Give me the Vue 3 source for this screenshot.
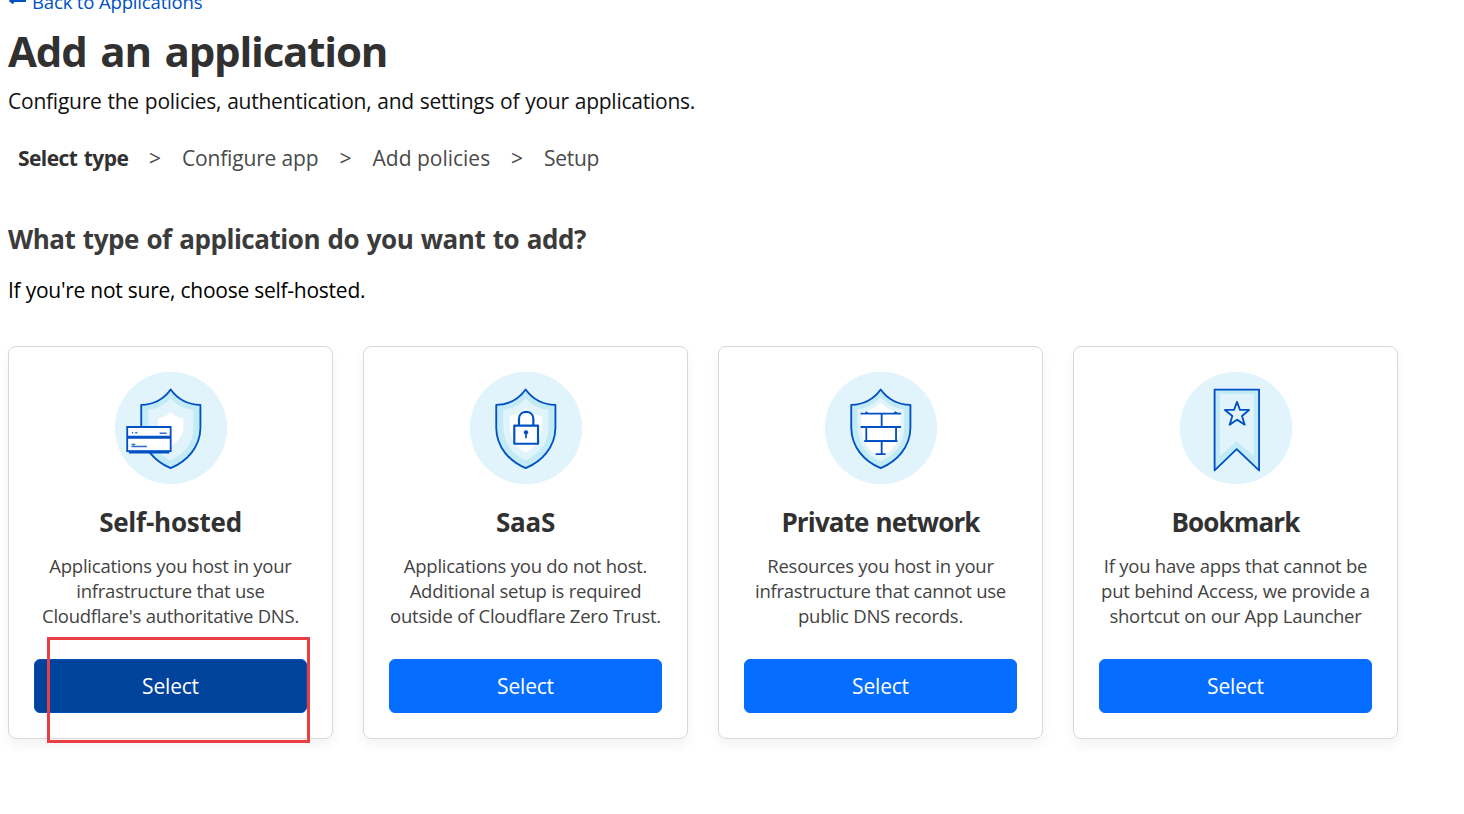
<script setup>
const steps = [
  { label: 'Select type', cls: 'current' },
  { label: 'Configure app', cls: 'configure' },
  { label: 'Add policies', cls: 'policies' },
  { label: 'Setup', cls: 'setup' },
]

const cards = [
  {
    id: 'self-hosted',
    title: 'Self-hosted',
    lines: ['Applications you host in your', 'infrastructure that use', "Cloudflare's authoritative DNS."],
    highlighted: true,
  },
  {
    id: 'saas',
    title: 'SaaS',
    lines: ['Applications you do not host.', 'Additional setup is required', 'outside of Cloudflare Zero Trust.'],
  },
  {
    id: 'private',
    title: 'Private network',
    lines: ['Resources you host in your', 'infrastructure that cannot use', 'public DNS records.'],
  },
  {
    id: 'bookmark',
    title: 'Bookmark',
    lines: ['If you have apps that cannot be', 'put behind Access, we provide a', 'shortcut on our App Launcher'],
  },
]
</script>

<template>
  <main class="page">
    <a class="back">
      <svg class="arrow" width="18" height="12" viewBox="0 0 18 12">
        <path d="M1 6H17M5 2.2L1.2 6L4.6 8.4" fill="none" stroke="#0051c3" stroke-width="1.9" />
      </svg>
      <span>Back to Applications</span>
    </a>
    <h1>Add an application</h1>
    <p class="intro">Configure the policies, authentication, and settings of your applications.</p>

    <nav class="steps">
      <template v-for="(step, i) in steps" :key="step.label">
        <span v-if="i" class="sep">&gt;</span>
        <span class="step" :class="step.cls">{{ step.label }}</span>
      </template>
    </nav>

    <h2>What type of application do you want to add?</h2>
    <p class="hint">If you're not sure, choose self-hosted.</p>

    <section class="cards">
      <article v-for="card in cards" :key="card.id" class="card" :class="card.id">
        <svg class="art" viewBox="11.5 17.5 338 338" fill="none">
          <circle cx="182" cy="188" r="168" fill="#e2f4fb" />
          <template v-if="card.id !== 'bookmark'">
            <path d="M181 73C161 101 132 118 93 119V188C94 246 133 288 181 308C229 288 269 246 270 188V119C231 118 201 101 181 73Z" fill="#c3ebf7" />
            <template v-if="card.id === 'self-hosted'">
              <path d="M181 99C163 119 143 130 114 134V188C116 237 144 268 181 285C218 268 248 237 249 188V134C219 130 199 119 181 99Z" fill="#e2f4fb" />
              <path d="M181 141C171 151 159 157 143 159V190C145 213 160 229 181 240C202 229 217 213 219 190V159C203 157 191 151 181 141Z" fill="#fff" />
            </template>
            <template v-else-if="card.id === 'saas'">
              <path d="M181 99C163 119 143 130 114 134V188C116 237 144 268 181 285C218 268 248 237 249 188V134C219 130 199 119 181 99Z" fill="#e2f4fb" />
              <path d="M181 126C169 140 154 149 134 152V190C136 225 156 248 181 262C206 248 227 225 229 190V152C208 149 193 140 181 126Z" fill="#fff" />
            </template>
            <template v-else>
              <path d="M181 96C163 116 141 128 112 132V188C114 239 143 271 181 288C219 271 250 239 251 188V132C221 128 199 116 181 96Z" fill="#e2f4fb" />
              <path d="M181 111C166 127 148 137 123 140V188C125 232 149 260 181 276C213 260 238 232 240 188V140C214 137 196 127 181 111Z" fill="#fff" />
            </template>
            <path d="M181 73C161 101 132 118 93 119V188C94 246 133 288 181 308C229 288 269 246 270 188V119C231 118 201 101 181 73Z" stroke="#0051c3" stroke-width="5.5" stroke-linejoin="round" />
          </template>

          <template v-if="card.id === 'self-hosted'">
            <path d="M51 185H181V257H51Z" fill="#fff" stroke="#0051c3" stroke-width="5.5" />
            <path d="M51 216H181" stroke="#0051c3" stroke-width="9" />
            <path d="M56 260H177" stroke="#0051c3" stroke-width="8" />
            <path d="M65 202H69M75 202H81M148 204H169M64 237H75M64 243H110" stroke="#2a6dce" stroke-width="4.5" />
          </template>

          <template v-else-if="card.id === 'saas'">
            <path d="M161 181V160C161 133 204 133 204 160V181" stroke="#0051c3" stroke-width="6.5" />
            <path d="M147 181H218V235H147Z" fill="#fff" stroke="#0051c3" stroke-width="6.5" stroke-linejoin="round" />
            <circle cx="182" cy="201" r="6.5" fill="#0051c3" />
            <path d="M182 202V219" stroke="#0051c3" stroke-width="5" />
          </template>

          <path
            v-else-if="card.id === 'private'"
            d="M121 145H242M121 185H242M132 227H231M138 185V227M227 185V227M184 145V185M184 227V266M166 266H196M136 140L142 144M222 140L232 145"
            stroke="#0051c3"
            stroke-width="5.5"
          />

          <template v-else>
            <path d="M118 73H251V315L184 251L118 315Z" fill="#c3ebf7" />
            <path d="M134 86H235V272L184 228L134 272Z" fill="#e2f4fb" />
            <path d="M118 73H251V315L184 251L118 315Z" stroke="#0051c3" stroke-width="5.5" stroke-linejoin="round" />
            <path d="M185 110L194 134H221L200 152L208 178L185 163L163 178L171 152L149 134H176Z" stroke="#0051c3" stroke-width="5.5" stroke-linejoin="round" />
          </template>
        </svg>
        <h3>{{ card.title }}</h3>
        <p class="desc">
          <span v-for="line in card.lines" :key="line">{{ line }}</span>
        </p>
        <button type="button">Select</button>
        <div v-if="card.highlighted" class="marker"></div>
      </article>
    </section>
  </main>
</template>

<style>
html,
body {
  background: #fff;
  overflow: hidden;
}
</style>

<style scoped>
.page {
  box-sizing: border-box;
  height: 814px;
  padding: 0 8px;
  overflow: hidden;
  font-family: 'Open Sans', 'Noto Sans', sans-serif;
  font-size: 21px;
  color: #111;
}

h1,
h2,
h3,
p,
span {
  margin: 0;
  white-space: nowrap;
}

.back {
  display: flex;
  align-items: center;
  gap: 5px;
  height: 30px;
  margin: -14px 0 2px 1px;
  font-size: 18.6px;
  letter-spacing: -0.2px;
  color: #0051c3;
}

h1 {
  font-size: 42px;
  line-height: 65px;
  letter-spacing: -1.2px;
  word-spacing: 4px;
  color: #313131;
}

.intro {
  line-height: 36px;
  letter-spacing: -0.24px;
  word-spacing: 0.65px;
}

.steps {
  display: flex;
  height: 40px;
  margin: 19px 0 0 10px;
  line-height: 40px;
  color: #4a4a4a;
}

.sep {
  width: 13px;
  margin: 0 20.5px;
  text-align: center;
  font-size: 21px;
}

.current {
  width: 110px;
  font-weight: 700;
  letter-spacing: -0.55px;
  word-spacing: 1.5px;
  color: #313131;
}

.configure {
  width: 136.5px;
  letter-spacing: -0.17px;
}

.policies {
  width: 117.5px;
}

.setup {
  letter-spacing: -0.3px;
}

h2 {
  margin-top: 41px;
  font-size: 26px;
  line-height: 41px;
  letter-spacing: -0.45px;
  word-spacing: 1.15px;
  color: #3b3b3b;
}

.hint {
  margin-top: 15px;
  line-height: 30px;
  letter-spacing: -0.25px;
  color: #000;
}

.cards {
  display: grid;
  grid-template-columns: repeat(4, 325px);
  gap: 30px;
  margin-top: 41px;
}

.card {
  position: relative;
  display: flex;
  flex-direction: column;
  align-items: center;
  box-sizing: border-box;
  height: 393px;
  padding: 24px 25px 25px;
  border: 1px solid #d9d9d9;
  border-radius: 8px;
  box-shadow: 0 6px 12px rgba(0, 0, 0, 0.05);
}

.art {
  width: 113px;
  height: 113px;
  flex: none;
}

h3 {
  margin-top: 18px;
  font-size: 26px;
  line-height: 40px;
  letter-spacing: -0.23px;
  color: #313131;
}

.private h3 {
  letter-spacing: -0.85px;
  word-spacing: 1px;
}

.bookmark h3 {
  letter-spacing: -0.85px;
}

.desc {
  display: flex;
  flex-direction: column;
  align-items: center;
  margin-top: 11px;
  font-size: 18.5px;
  line-height: 25px;
  letter-spacing: -0.25px;
  color: #434343;
}

button {
  width: 100%;
  height: 54px;
  margin-top: auto;
  padding: 0 0 1px;
  border: 1px solid #0a6cff;
  border-radius: 6px;
  background: #056dff;
  color: #fff;
  font-family: inherit;
  font-size: 21px;
  letter-spacing: -0.19px;
}

.self-hosted button {
  background: #00439c;
  border-color: #0050b8;
}

.marker {
  position: absolute;
  top: 290px;
  left: 38px;
  box-sizing: border-box;
  width: 263px;
  height: 106px;
  border: 3px solid #e93e42;
}
</style>
